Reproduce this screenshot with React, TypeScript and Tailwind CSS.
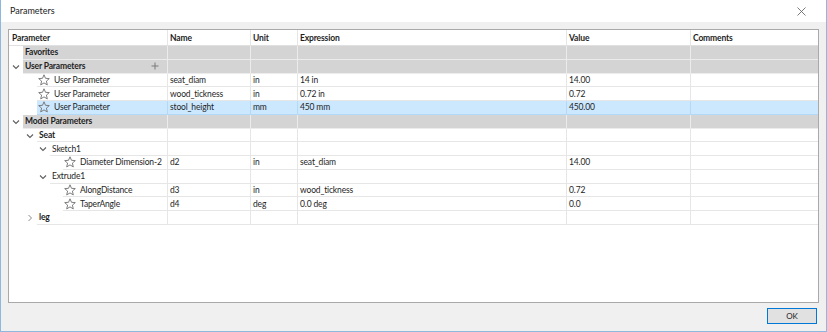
import type { ReactNode } from "react";

// Колонки таблицы параметров (ширины в px)
const COLS = [158, 83, 47, 269, 124];

type RowKind = "group" | "bold" | "item";

interface RowProps {
  readonly kind: RowKind;
  readonly start: number; // отступ ячейки от левого края таблицы
  readonly chevron?: "down" | "right";
  readonly star?: boolean;
  readonly plus?: boolean;
  readonly selected?: boolean;
  readonly label: string;
  readonly cells?: readonly string[];
}

function Chevron({ dir }: { readonly dir: "down" | "right" }) {
  return (
    <svg width="8" height="8" viewBox="0 0 8 8" className="block">
      {dir === "down" ? (
        <polyline points="1,2.5 4,5.5 7,2.5" fill="none" stroke="#5f5f5f" strokeWidth="1.1" />
      ) : (
        <polyline points="2.5,1 5.5,4 2.5,7" fill="none" stroke="#8a8a8a" strokeWidth="1" />
      )}
    </svg>
  );
}

function StarIcon() {
  return (
    <svg width="12" height="12" viewBox="0 0 12 12" className="block">
      <polygon
        points="6,0.8 7.5,4.3 11.3,4.6 8.4,7.1 9.3,10.9 6,8.9 2.7,10.9 3.6,7.1 0.7,4.6 4.5,4.3"
        fill="none"
        stroke="#6f6f6f"
        strokeWidth="0.9"
        strokeLinejoin="round"
      />
    </svg>
  );
}

function Row({ kind, start, chevron, star, plus, selected, label, cells = [] }: RowProps) {
  const bg = selected ? "bg-[#cce8ff]" : kind === "group" ? "bg-[#d4d4d4]" : "bg-white";
  const line = selected ? "border-[#b3d9f7]" : kind === "group" ? "border-[#ececec]" : "border-[#e6e6e6]";
  const weight = kind === "item" ? "font-normal" : "font-bold";

  return (
    <div className="flex h-[13.75px] text-[#1e1e1e]">
      {/* Первая колонка с отступом дерева */}
      <div className="flex shrink-0" style={{ width: COLS[0] }}>
        <div className="relative shrink-0 bg-white" style={{ width: start }}>
          {chevron && (
            <span className="absolute top-[3px]" style={{ left: start - 11 }}>
              <Chevron dir={chevron} />
            </span>
          )}
        </div>
        <div className={`relative flex min-w-0 flex-1 items-center border-b ${line} ${bg} ${weight} ${star ? "pl-[1px]" : "pl-[2px]"}`}>
          {star && (
            <span className="mr-[4px]">
              <StarIcon />
            </span>
          )}
          <span className="whitespace-nowrap">{label}</span>
          {plus && (
            <svg width="8" height="8" viewBox="0 0 8 8" className="absolute right-[8px] top-[2px]">
              <path d="M4 0.5V7.5M0.5 4H7.5" stroke="#7a7a7a" strokeWidth="1" />
            </svg>
          )}
        </div>
      </div>
      {COLS.slice(1).map((w, i) => (
        <div key={i} className={`flex shrink-0 items-center whitespace-nowrap border-b border-l ${line} ${bg} pl-[2px]`} style={{ width: w }}>
          {cells[i] ?? ""}
        </div>
      ))}
      <div className={`flex-1 border-b border-l ${line} ${bg}`} />
    </div>
  );
}

function HeaderCell({ children, width }: { readonly children: ReactNode; readonly width?: number }) {
  return (
    <div
      className={`flex items-center border-l border-[#e6e6e6] pl-[2px] first:border-l-0 first:pl-[3px] ${width ? "shrink-0" : "flex-1"}`}
      style={width ? { width } : undefined}
    >
      {children}
    </div>
  );
}

export default function App() {
  return (
    <div
      className="flex h-[332px] w-[827px] flex-col border-x border-b border-[#8fb8de] bg-[#f0f0f0] text-[8.5px] leading-[12px] tracking-[-0.15px] text-[#1e1e1e]"
      style={{ fontFamily: 'Lato, "Noto Sans", sans-serif' }}
    >
      {/* Заголовок окна */}
      <div className="flex h-[22px] shrink-0 items-center justify-between bg-white pl-[9px] pr-[20px]">
        <span className="text-[9px] tracking-normal text-[#222]">Parameters</span>
        <svg width="9" height="9" viewBox="0 0 9 9">
          <path d="M0.5 0.5L8.5 8.5M8.5 0.5L0.5 8.5" stroke="#6a6a6a" strokeWidth="0.9" />
        </svg>
      </div>

      {/* Таблица */}
      <div className="mx-[7px] mt-[7px] h-[274px] shrink-0 border border-[#a9a9a9] bg-white">
        <div className="flex h-[16px] border-b border-[#e0e0e0] font-bold">
          <HeaderCell width={COLS[0]}>Parameter</HeaderCell>
          <HeaderCell width={COLS[1]}>Name</HeaderCell>
          <HeaderCell width={COLS[2]}>Unit</HeaderCell>
          <HeaderCell width={COLS[3]}>Expression</HeaderCell>
          <HeaderCell width={COLS[4]}>Value</HeaderCell>
          <HeaderCell>Comments</HeaderCell>
        </div>

        <Row kind="group" start={14} label="Favorites" />
        <Row kind="group" start={14} chevron="down" plus label="User Parameters" />
        <Row kind="item" start={28} star label="User Parameter" cells={["seat_diam", "in", "14 in", "14.00"]} />
        <Row kind="item" start={28} star label="User Parameter" cells={["wood_tickness", "in", "0.72 in", "0.72"]} />
        <Row kind="item" start={28} star selected label="User Parameter" cells={["stool_height", "mm", "450 mm", "450.00"]} />
        <Row kind="group" start={14} chevron="down" label="Model Parameters" />
        <Row kind="bold" start={28} chevron="down" label="Seat" />
        <Row kind="item" start={41} chevron="down" label="Sketch1" />
        <Row kind="item" start={54} star label="Diameter Dimension-2" cells={["d2", "in", "seat_diam", "14.00"]} />
        <Row kind="item" start={41} chevron="down" label="Extrude1" />
        <Row kind="item" start={54} star label="AlongDistance" cells={["d3", "in", "wood_tickness", "0.72"]} />
        <Row kind="item" start={54} star label="TaperAngle" cells={["d4", "deg", "0.0 deg", "0.0"]} />
        <Row kind="bold" start={28} chevron="right" label="leg" />
      </div>

      {/* Кнопки */}
      <div className="flex flex-1 items-start justify-end pr-[9px] pt-[5px]">
        <button
          type="button"
          className="flex h-[16px] w-[50px] items-center justify-center border border-[#0078d7] bg-[#e1e1e1] text-[8px] tracking-normal text-[#222]"
        >
          OK
        </button>
      </div>
    </div>
  );
}
